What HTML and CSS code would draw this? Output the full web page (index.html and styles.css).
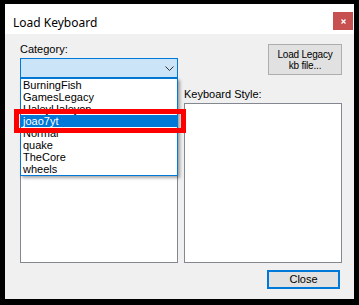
FILE: index.html
```html
<!DOCTYPE html>
<html>
<head>
<meta charset="utf-8">
<link rel="stylesheet" href="styles.css">
</head>
<body>
<div class="window">
  <div class="titlebar">
    <span class="title">Load Keyboard</span>
    <div class="close-x"><svg width="5" height="5" viewBox="0 0 5 5"><path d="M0.5 0.5 L4.5 4.5 M4.5 0.5 L0.5 4.5" stroke="#fff" stroke-width="1.3" fill="none"/></svg></div>
  </div>
  <div class="content">
    <div class="columns">
      <div class="col col-left">
        <div class="lbl">Category:</div>
        <div class="combo"><svg width="9" height="5" viewBox="0 0 9 5"><path d="M0.5 0.5 L4.5 4.5 L8.5 0.5" stroke="#333" stroke-width="1" fill="none"/></svg></div>
        <div class="listbox listbox-left"></div>
      </div>
      <div class="col col-right">
        <div class="btn legacy">Load Legacy<br>kb file...</div>
        <div class="lbl style-lbl">Keyboard Style:</div>
        <div class="listbox"></div>
      </div>
    </div>
    <div class="footer">
      <div class="btn close-btn">Close</div>
    </div>
    <ul class="dropdown">
      <li>BurningFish</li>
      <li>GamesLegacy</li>
      <li>HaleyHaleyon</li>
      <li class="sel">joao7yt</li>
      <li>Normal</li>
      <li>quake</li>
      <li>TheCore</li>
      <li>wheels</li>
    </ul>
    <div class="annot"></div>
  </div>
</div>
</body>
</html>
```
FILE: styles.css
```css
html, body {
  margin: 0;
  padding: 0;
  background: #000;
  width: 359px;
  height: 305px;
  overflow: hidden;
}
.window {
  margin: 4px 0 0 5px;
  width: 349px;
  height: 295px;
  background: #f0f0f0;
  font-family: "Liberation Sans", Arial, sans-serif;
  font-size: 11px;
  color: #000;
}
.titlebar {
  height: 30px;
  background: #fff;
  display: flex;
  align-items: flex-start;
}
.title {
  font-family: "Noto Sans", "Open Sans", sans-serif;
  font-size: 12px;
  line-height: 16px;
  margin: 11px 0 0 8px;
  color: #000;
}
.close-x {
  margin: 8px 1px 0 auto;
  width: 20px;
  height: 18px;
  background: #c75050;
  display: flex;
  align-items: center;
  justify-content: center;
}
.close-x svg { display: block; }
.content {
  position: relative;
  height: 265px;
}
.columns {
  display: grid;
  grid-template-columns: 158px 158px;
  column-gap: 6px;
  padding-left: 15px;
  height: 229px;
}
.col {
  display: flex;
  flex-direction: column;
}
.col-left { padding-top: 7px; }
.lbl {
  height: 17px;
  line-height: 17px;
  white-space: nowrap;
}
.combo {
  box-sizing: border-box;
  height: 20px;
  background: #cce4f7;
  border: 1px solid #0078d7;
  display: flex;
  align-items: center;
  justify-content: flex-end;
  padding-right: 3px;
}
.combo svg { display: block; }
.listbox {
  flex: 1;
  box-sizing: border-box;
  background: #fff;
  border: 1px solid #828790;
}
.listbox-left { margin-top: 25px; }
.btn {
  box-sizing: border-box;
  background: #e1e1e1;
  border: 1px solid #adadad;
  display: flex;
  align-items: center;
  justify-content: center;
  text-align: center;
}
.legacy {
  align-self: flex-end;
  margin-top: 10px;
  width: 74px;
  height: 31px;
  font-size: 10px;
  letter-spacing: -0.2px;
  line-height: 11px;
}
.style-lbl {
  margin-top: 11px;
}
.footer {
  display: flex;
  justify-content: flex-end;
  padding: 7px 14px 0 0;
}
.close-btn {
  width: 73px;
  height: 19px;
  border: 2px solid #0078d7;
  line-height: 15px;
}
.dropdown {
  position: absolute;
  left: 15px;
  top: 44px;
  width: 158px;
  box-sizing: border-box;
  margin: 0;
  padding: 0;
  list-style: none;
  background: #fff;
  border: 1px solid #0078d7;
  box-shadow: 2px 2px 3px rgba(0, 0, 0, 0.35);
}
.dropdown li {
  height: 12px;
  line-height: 12px;
  padding-left: 2px;
  white-space: nowrap;
}
.dropdown li.sel {
  background: #0078d7;
  color: #fff;
}
.annot {
  position: absolute;
  left: 9px;
  top: 75px;
  width: 172px;
  height: 24px;
  box-sizing: border-box;
  border: 5px solid #ff0000;
}
```
